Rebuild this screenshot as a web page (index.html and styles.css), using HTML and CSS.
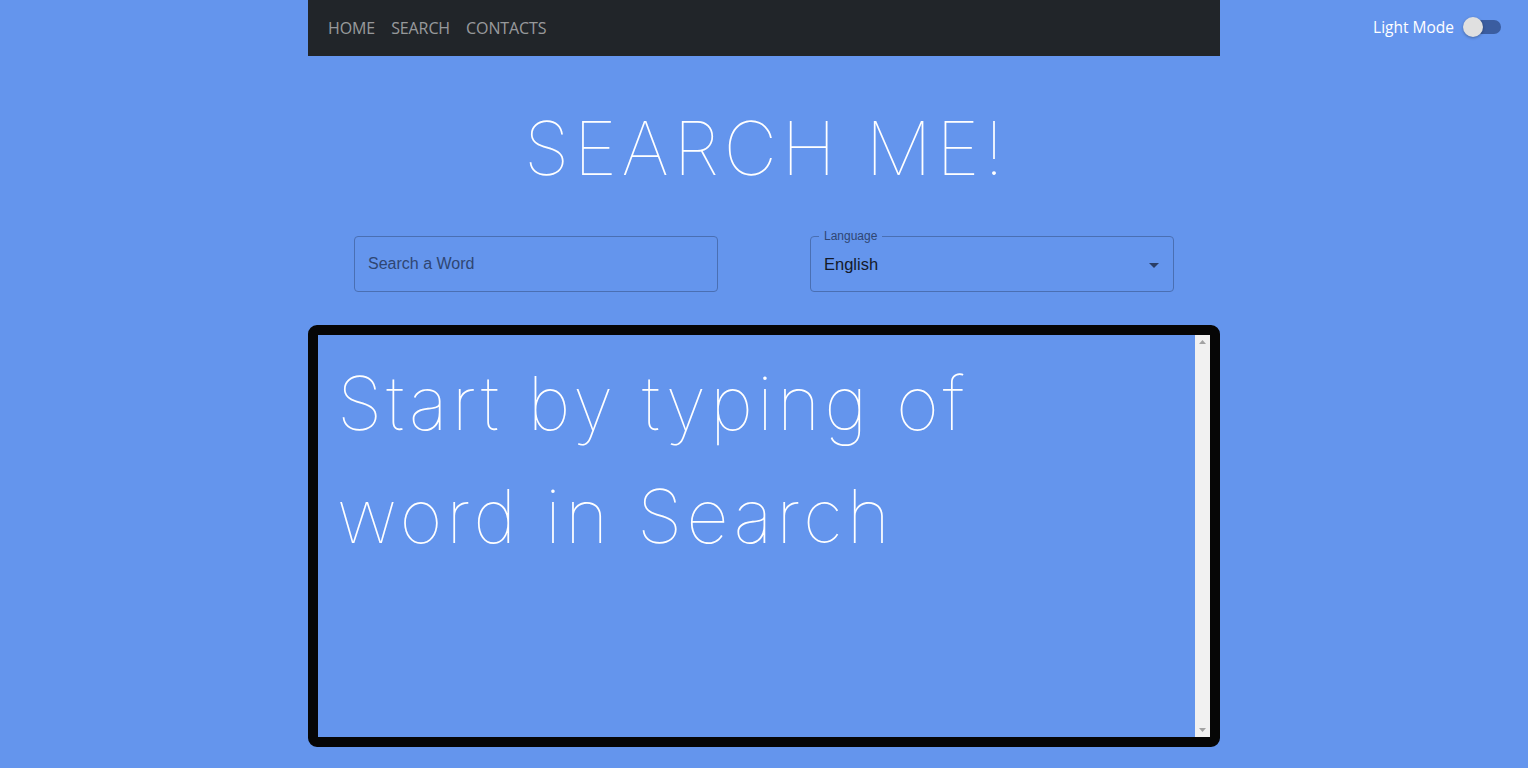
FILE: index.html
```html
<!DOCTYPE html>
<html lang="en">
<head>
<meta charset="utf-8">
<title>Search Me</title>
<link rel="stylesheet" href="styles.css">
</head>
<body>
<div class="page">
  <header class="topbar">
    <nav class="navbar">
      <a class="nav-link" href="#">HOME</a>
      <a class="nav-link" href="#">SEARCH</a>
      <a class="nav-link" href="#">CONTACTS</a>
    </nav>
    <div class="mode">
      <span class="mode-label">Light Mode</span>
      <span class="switch"><span class="track"></span><span class="thumb"></span></span>
    </div>
  </header>

  <h1 class="title">SEARCH ME!</h1>

  <div class="controls">
    <div class="field">
      <span class="placeholder">Search a Word</span>
    </div>
    <div class="field select">
      <span class="legend">Language</span>
      <span class="value">English</span>
      <svg class="caret" width="10" height="5" viewBox="0 0 10 5"><path d="M0 0 L5 5 L10 0 Z" fill="#2a3e66"/></svg>
    </div>
  </div>

  <section class="result">
    <div class="result-text">Start by typing of word in Search</div>
    <div class="scrollbar">
      <svg class="arrow" width="7" height="4" viewBox="0 0 7 4"><path d="M0 4 L3.5 0 L7 4 Z" fill="#a3a3a3"/></svg>
      <svg class="arrow" width="7" height="4" viewBox="0 0 7 4"><path d="M0 0 L3.5 4 L7 0 Z" fill="#a3a3a3"/></svg>
    </div>
  </section>
</div>
</body>
</html>
```

FILE: styles.css
```css
* { box-sizing: border-box; }
html, body { margin: 0; padding: 0; }
body {
  background: #6495ed;
  font-family: "Open Sans", "Noto Sans", sans-serif;
  height: 768px;
  overflow: hidden;
}
.page {
  position: relative;
  width: 1528px;
  display: flex;
  flex-direction: column;
  align-items: center;
}
.topbar {
  width: 912px;
  height: 56px;
}
.navbar {
  background: #212529;
  height: 56px;
  display: flex;
  align-items: center;
  padding-left: 20px;
  gap: 16px;
}
.nav-link {
  color: rgba(255,255,255,0.55);
  text-decoration: none;
  font-size: 16px;
  letter-spacing: -0.1px;
}
.mode {
  position: absolute;
  top: 14px;
  right: 27px;
  display: flex;
  align-items: center;
  gap: 9px;
}
.mode-label {
  color: #fff;
  font-size: 15.5px;
}
.switch {
  position: relative;
  width: 38px;
  height: 26px;
  display: block;
}
.track {
  position: absolute;
  left: 2px;
  top: 6px;
  width: 36px;
  height: 14px;
  border-radius: 7px;
  background: #3b5da0;
}
.thumb {
  position: absolute;
  left: 0;
  top: 3px;
  width: 20px;
  height: 20px;
  border-radius: 50%;
  background: #e0e0e0;
  box-shadow: 0 1px 3px rgba(0,0,0,0.3);
}
.title {
  margin: 0;
  padding: 47px 0 0 4.5px;
  height: 180px;
  font-family: "Inter", sans-serif;
  font-weight: 100;
  font-size: 74px;
  line-height: 90px;
  color: #fff;
  letter-spacing: 4.5px;
}
.controls {
  display: flex;
  gap: 92px;
}
.field {
  position: relative;
  width: 364px;
  height: 56px;
  border: 1px solid #4a6fb3;
  border-radius: 4px;
  display: flex;
  align-items: center;
  padding: 0 13px;
  font-family: "Liberation Sans", Arial, sans-serif;
  font-size: 16px;
}
.placeholder { color: #2f4673; }
.select { padding-right: 14px; justify-content: space-between; }
.value { color: #141a2a; font-size: 16.5px; }
.legend {
  position: absolute;
  top: -8px;
  left: 8px;
  padding: 0 5px;
  background: #6495ed;
  font-size: 12px;
  color: #2f4673;
  line-height: 14px;
}
.caret { margin-top: 2px; }
.result {
  margin-top: 33px;
  width: 912px;
  height: 422px;
  border: 10px solid #060606;
  border-radius: 9px;
  display: flex;
}
.result-text {
  flex: 1;
  padding: 12px 0 0 19px;
  font-family: "Inter", sans-serif;
  font-weight: 100;
  font-size: 74px;
  line-height: 113px;
  letter-spacing: 4px;
  color: #fff;
  max-width: 700px;
}
.scrollbar {
  margin-left: auto;
  width: 15px;
  background: #f1f1f1;
  display: flex;
  flex-direction: column;
  justify-content: space-between;
  align-items: center;
  padding: 5px 0 5px;
}
```
